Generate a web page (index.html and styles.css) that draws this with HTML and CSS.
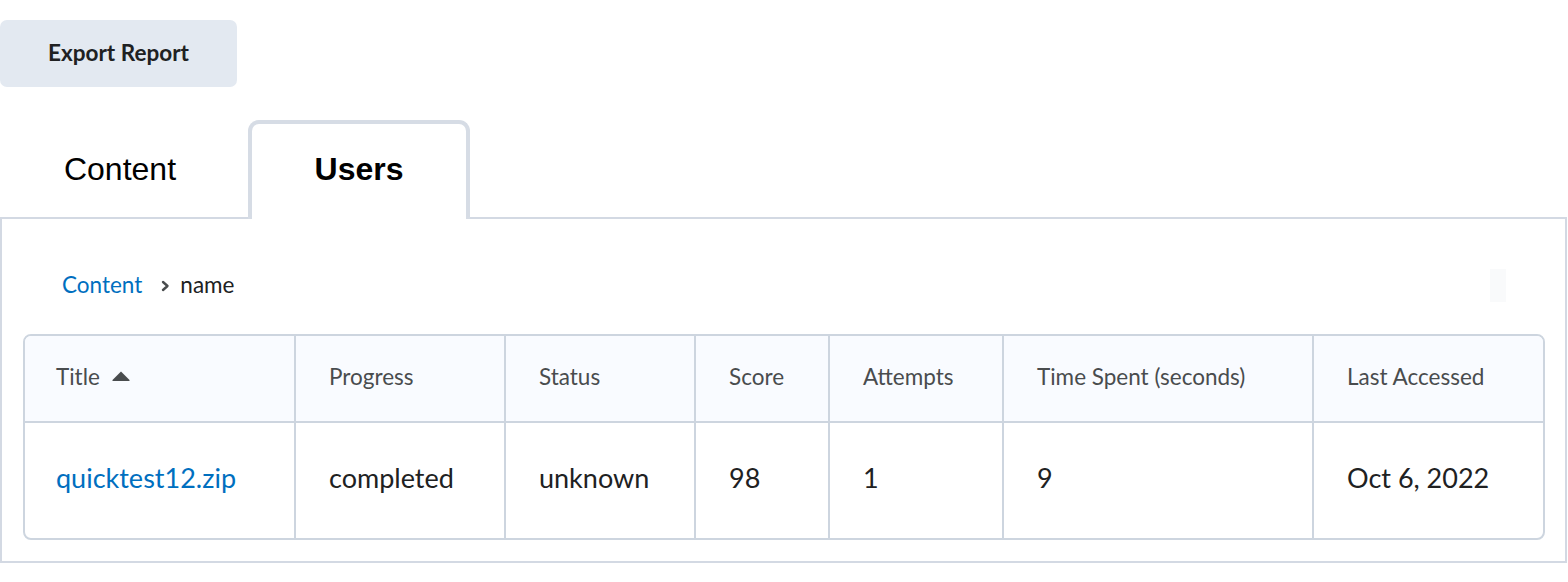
FILE: index.html
```html
<!DOCTYPE html>
<html>
<head>
<meta charset="utf-8">
<link rel="stylesheet" href="styles.css">
</head>
<body>
<div class="page">
  <button class="export-btn">Export Report</button>
  <div class="tabs">
    <div class="tab">Content</div>
    <div class="tab tab-active">Users</div>
  </div>
  <div class="panel">
    <div class="crumb-row">
      <div class="crumbs">
        <a class="crumb-link" href="#">Content</a>
        <svg class="chev" width="9" height="12" viewBox="0 0 9 12"><path d="M2 2 L6.5 6 L2 10" fill="none" stroke="#494c4e" stroke-width="2.4" stroke-linecap="round" stroke-linejoin="round"/></svg>
        <span class="crumb-cur">name</span>
      </div>
      <div class="ghost"></div>
    </div>
    <div class="table-wrap">
      <table class="grid">
        <colgroup>
          <col style="width:271px"><col style="width:210px"><col style="width:190px"><col style="width:134px"><col style="width:174px"><col style="width:310px"><col>
        </colgroup>
        <thead>
          <tr>
            <th><span class="th-sort">Title <svg class="caret" width="20" height="12" viewBox="0 0 20 12"><path d="M10 1.5 L18.5 10 Q19 11 18 11 L2 11 Q1 11 1.5 10 Z" fill="#494c4e"/></svg></span></th>
            <th>Progress</th>
            <th>Status</th>
            <th>Score</th>
            <th>Attempts</th>
            <th>Time Spent (seconds)</th>
            <th>Last Accessed</th>
          </tr>
        </thead>
        <tbody>
          <tr>
            <td><a class="row-link" href="#">quicktest12.zip</a></td>
            <td>completed</td>
            <td>unknown</td>
            <td>98</td>
            <td>1</td>
            <td>9</td>
            <td>Oct 6, 2022</td>
          </tr>
        </tbody>
      </table>
    </div>
  </div>
</div>
</body>
</html>
```

FILE: styles.css
```css
* { box-sizing: border-box; }
html, body { margin: 0; padding: 0; background: #fff; }
body { font-family: Lato, "Noto Sans", sans-serif; color: #202122; }
.page { width: 1568px; padding-top: 20px; }

.export-btn {
  display: block;
  width: 237px;
  height: 67px;
  border: none;
  border-radius: 7px;
  background: #e3e9f1;
  font-family: Lato, sans-serif;
  font-weight: 700;
  font-size: 22.5px;
  color: #202122;
  padding: 0 0 3px 0;
  cursor: pointer;
}

.tabs {
  display: flex;
  margin-top: 33px;
  height: 99px;
  margin-bottom: -2px;
  position: relative;
  z-index: 1;
}
.tab {
  width: 248px;
  display: flex;
  align-items: center;
  justify-content: center;
  font-family: "Liberation Sans", Arial, sans-serif;
  font-size: 32px;
  color: #000;
  padding-right: 8px;
}
.tab-active {
  width: 222px;
  border: 4px solid #d6dce5;
  border-bottom: none;
  border-radius: 11px 11px 0 0;
  background: #fff;
  font-weight: 700;
  padding: 0 0 5px 0;
}

.panel {
  width: 1567px;
  border: 2px solid #d3d9e3;
  padding: 50px 20px 21px 21px;
}
.crumb-row {
  display: flex;
  justify-content: space-between;
  align-items: center;
  height: 32px;
}
.crumbs {
  display: flex;
  align-items: center;
  padding-left: 39px;
  font-size: 22.5px;
  line-height: 32px;
}
.crumb-link { color: #006fbf; text-decoration: none; }
.chev { margin: 2px 10px 0 19px; }
.crumb-cur { color: #202122; }
.ghost {
  width: 16px;
  height: 33px;
  background: #f9fafb;
  margin-right: 39px;
}

.table-wrap { margin-top: 33px; }
.grid {
  width: 1522px;
  border-collapse: separate;
  border-spacing: 0;
  table-layout: fixed;
  border: 2px solid #cdd5df;
  border-radius: 8px;
  overflow: hidden;
}
.grid th, .grid td {
  text-align: left;
  padding: 0 0 0 33px;
  border-right: 2px solid #cdd5df;
  white-space: nowrap;
}
.grid th:first-child, .grid td:first-child { padding-left: 31px; }
.grid th:last-child, .grid td:last-child { border-right: none; }
.grid th {
  height: 87px;
  background: #f9fbff;
  font-weight: 400;
  font-size: 22.5px;
  color: #494c4e;
  border-bottom: 2px solid #cdd5df;
  padding-bottom: 4px;
}
.grid td {
  height: 115px;
  font-size: 27px;
  color: #202122;
  padding-bottom: 6px;
}
.th-sort { display: inline-flex; align-items: center; gap: 11px; }
.caret { margin-top: -2px; }
.row-link { color: #006fbf; text-decoration: none; }
```
